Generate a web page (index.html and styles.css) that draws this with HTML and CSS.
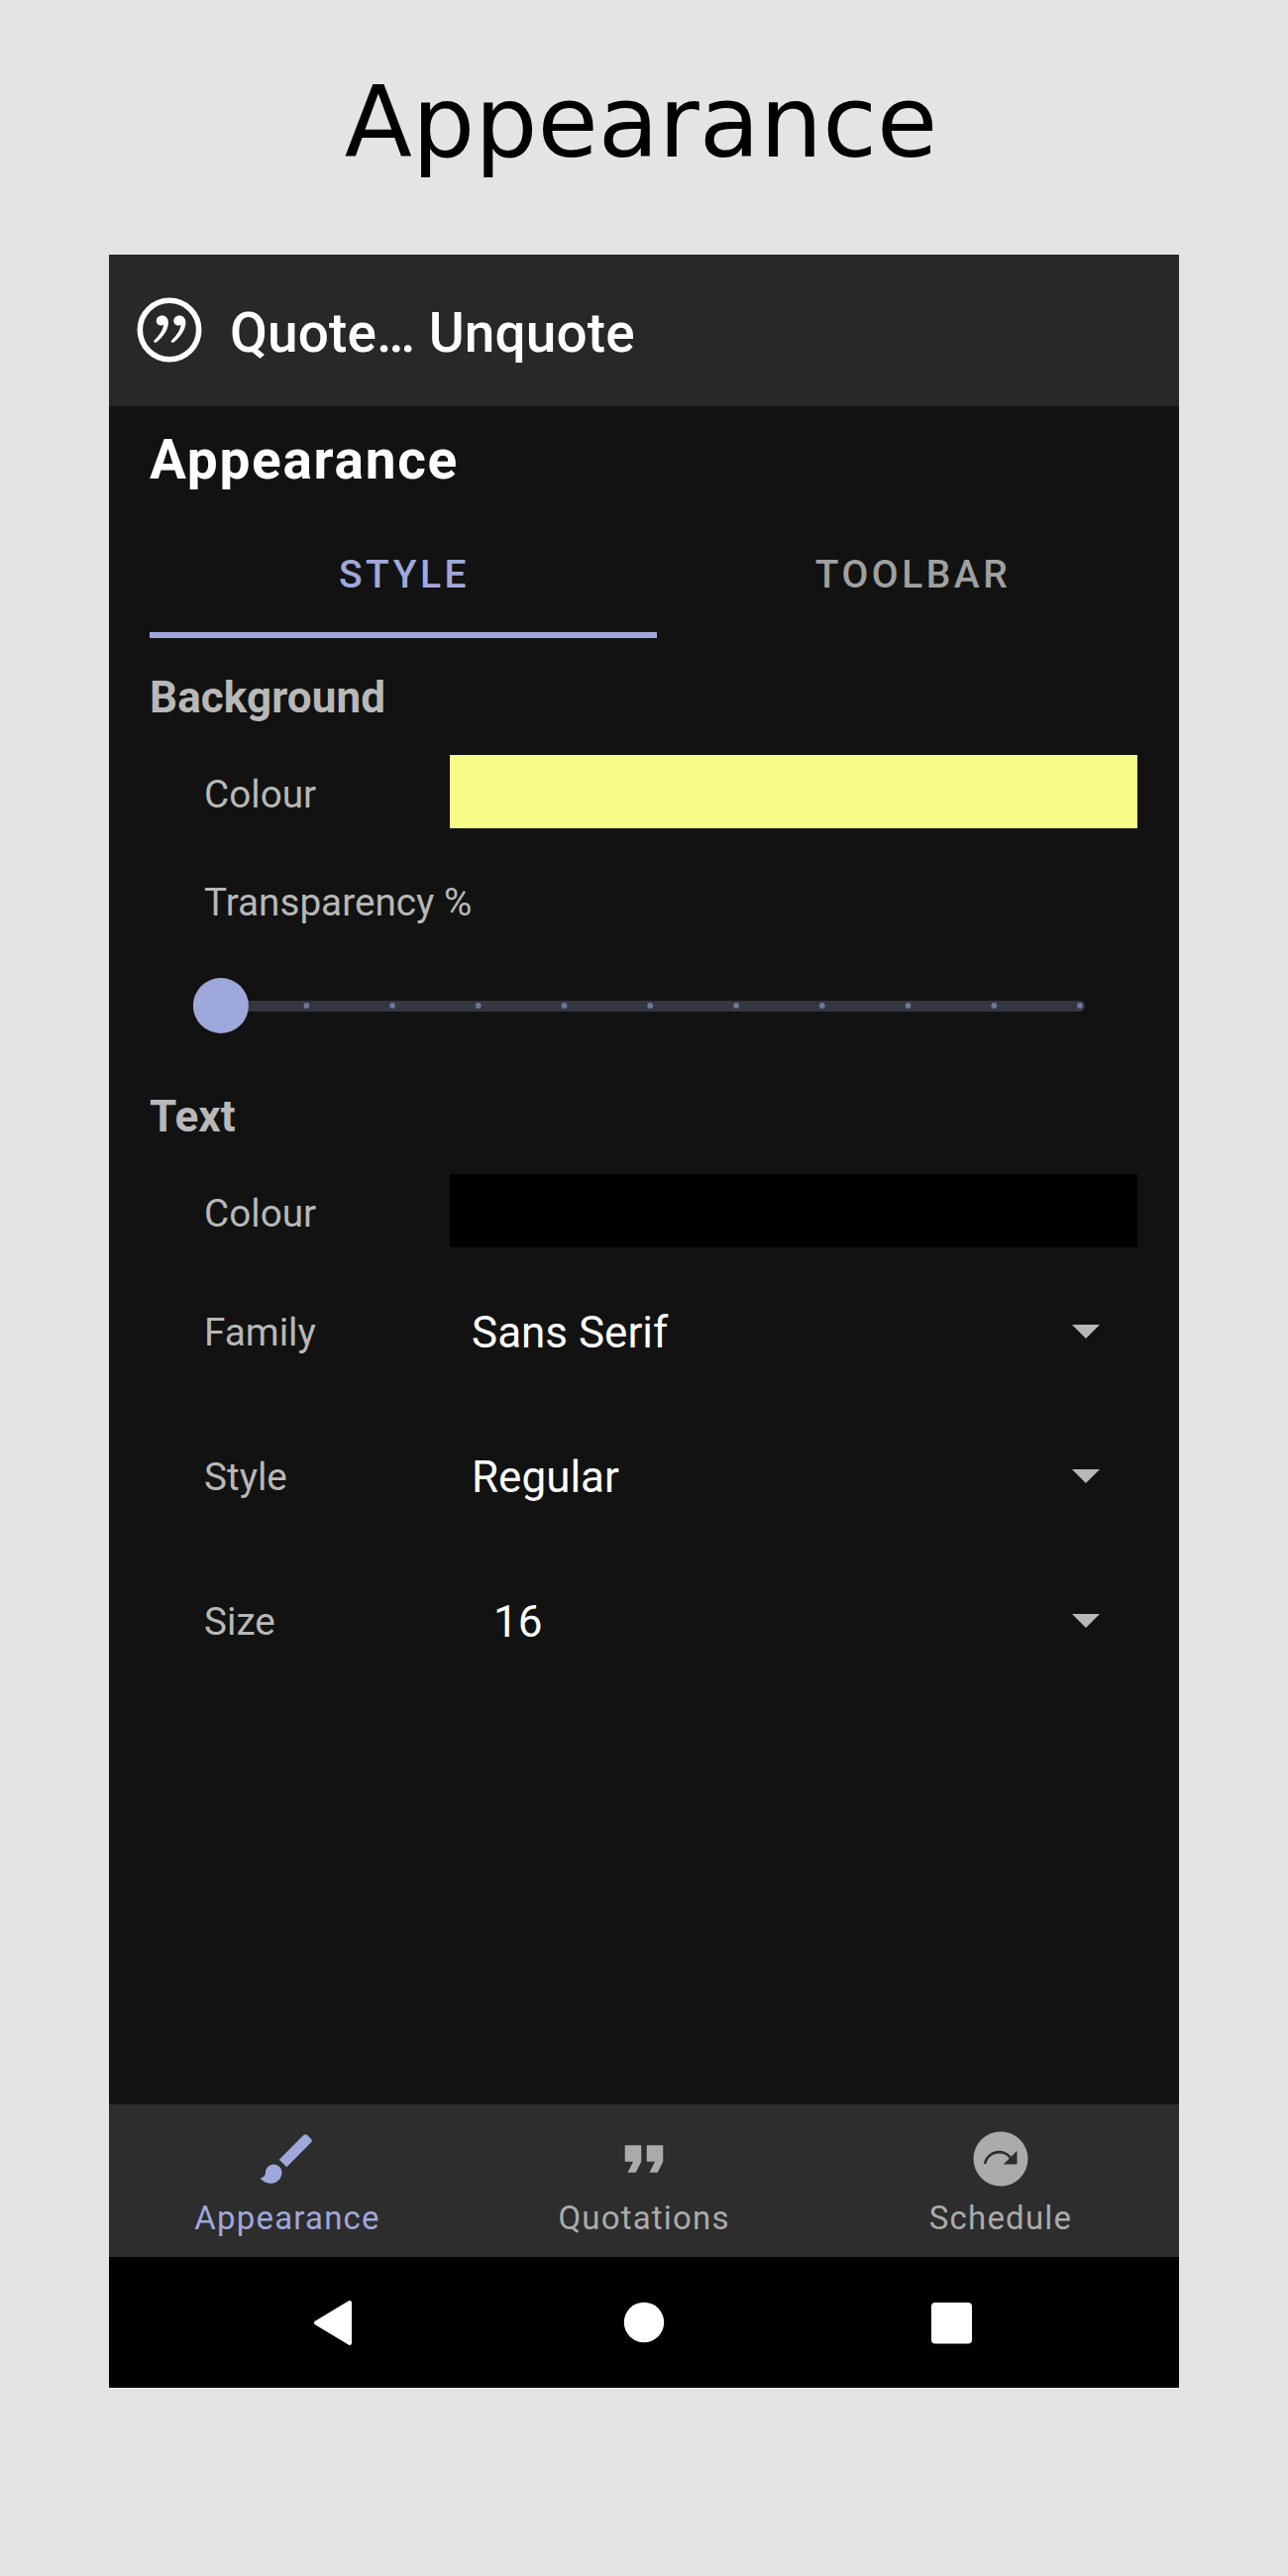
FILE: index.html
```html
<!DOCTYPE html>
<html lang="en">
<head>
<meta charset="utf-8">
<title>Appearance</title>
<link rel="stylesheet" href="styles.css">
</head>
<body>
<h1 class="caption">Appearance</h1>
<main class="phone">
  <header class="app-bar">
    <svg class="logo" viewBox="0 0 66 66"><circle cx="33" cy="33" r="29.7" fill="none" stroke="#fff" stroke-width="5.600"/><g fill="#fff"><path id="q" d="M25.500 18.500c-3.200 0-5.700 2.300-5.700 5.200 0 2.800 2.100 4.800 4.700 4.800 1 0 2-.3 2.600-.8-.7 5.600-4.500 11-9.200 15.600-1.700 1.600.3 3.400 1.900 2.100C26.500 40.300 31.900 33 31.900 25.500c0-4.300-2.500-7-6.400-7z"/><use href="#q" x="17.500"/></g></svg>
    <span class="app-name">Quote… Unquote</span>
  </header>
  <section class="content">
    <h2 class="page-title">Appearance</h2>
    <nav class="tabs"><span class="tab tab-active">STYLE</span><span class="tab">TOOLBAR</span></nav>
    <h3 class="group-title">Background</h3>
    <div class="row colour-row"><span class="label">Colour</span><span class="swatch swatch-yellow"></span></div>
    <div class="row transparency-row"><span class="label">Transparency %</span></div>
    <svg class="slider" viewBox="0 0 914 60">
      <rect x="22" y="25" width="878" height="11" rx="5.500" fill="#343640"/>
      <path d="M114.300 30h0M201.100 30h0M287.800 30h0M374.600 30h0M461.300 30h0M548.100 30h0M634.800 30h0M721.600 30h0M808.300 30h0M895 30h0" stroke="#70759a" stroke-width="5.800" stroke-linecap="round"/>
      <circle cx="27.900" cy="30" r="28" fill="#9fa8da"/>
    </svg>
    <h3 class="group-title text-title">Text</h3>
    <div class="row colour-row"><span class="label">Colour</span><span class="swatch swatch-black"></span></div>
    <div class="row select-row"><span class="label">Family</span><span class="value">Sans Serif</span><svg class="arrow" viewBox="0 0 28 14"><path d="M0 0h28L14 14z"/></svg></div>
    <div class="row select-row"><span class="label">Style</span><span class="value">Regular</span><svg class="arrow" viewBox="0 0 28 14"><path d="M0 0h28L14 14z"/></svg></div>
    <div class="row select-row"><span class="label">Size</span><span class="value value-number">16</span><svg class="arrow" viewBox="0 0 28 14"><path d="M0 0h28L14 14z"/></svg></div>
  </section>
  <nav class="bottom-nav">
    <div class="item item-active"><svg class="icon" viewBox="0 0 24 24"><path fill="currentColor" d="M7 14c-1.660 0-3 1.340-3 3 0 1.310-1.160 2-2 2 .92 1.220 2.490 2 4 2 2.210 0 4-1.790 4-4 0-1.660-1.340-3-3-3zm13.710-9.370l-1.340-1.340c-.39-.39-1.020-.39-1.410 0L9 12.250 11.750 15l8.960-8.960c.39-.39.39-1.020 0-1.410z"/></svg><span>Appearance</span></div>
    <div class="item"><svg class="icon" viewBox="0 0 24 24"><path fill="currentColor" d="M6 17h3l2-4V7H5v6h3zm8 0h3l2-4V7h-6v6h3z"/></svg><span>Quotations</span></div>
    <div class="item"><svg class="icon" viewBox="0 0 24 24"><circle cx="12" cy="12" r="10" fill="currentColor"/><path d="M6.150 13.800A5.350 5.350 0 0 1 15.900 12" fill="none" stroke="#2d2d2d"/><path fill="#2d2d2d" d="M18 9v5h-5z"/></svg><span>Schedule</span></div>
  </nav>
  <footer class="system-nav">
    <svg class="sys" viewBox="0 0 48 48"><path d="M38 4v41L4 24.500z" fill="#fff" stroke="#fff" stroke-width="4" stroke-linejoin="round"/></svg>
    <svg class="sys" viewBox="0 0 48 48"><circle cx="24" cy="24" r="20.200" fill="#fff"/></svg>
    <svg class="sys" viewBox="0 0 48 48"><rect x="3" y="4" width="41" height="41.500" rx="4" fill="#fff"/></svg>
  </footer>
</main>
</body>
</html>
```
FILE: styles.css
```css
body { margin: 0; height: 2600px; background: #e4e4e4; font-family: Roboto, sans-serif; }
h1, h2, h3 { margin: 0; }
.caption { height: 257px; box-sizing: border-box; padding-top: 66px; padding-right: 6px; font: 400 99.7px/116px "DejaVu Sans", sans-serif; text-align: center; color: #000; }
.phone { width: 1080px; height: 2153px; margin: 0 auto; display: flex; flex-direction: column; background: #121212; color: #fff; }
.app-bar { height: 153px; display: flex; align-items: center; background: #282828; }
.logo { width: 66px; height: 66px; margin: 0 0 1px 28px; }
.app-name { margin-left: 28px; padding-top: 4px; font-size: 55px; font-weight: 500; line-height: 64px; letter-spacing: 0.1px; white-space: nowrap; }
.content { flex: 1; padding-left: 41px; padding-right: 42px; }
.page-title { padding-top: 21px; font-size: 55px; font-weight: 700; line-height: 66px; letter-spacing: 0.031em; }
.tabs { display: flex; height: 132px; margin-top: 15px; }
.tab { flex: none; width: 512px; height: 132px; box-sizing: border-box; padding: 45px 0 0 5px; text-align: center; font-size: 39px; font-weight: 500; line-height: 46px; letter-spacing: 0.0893em; color: #a0a0a0; }
.tab-active { padding-left: 2px; color: #9fa8da; border-bottom: 6px solid #9fa8da; }
.group-title { margin-top: 33px; font-size: 44px; font-weight: 700; line-height: 54px; letter-spacing: 0.1px; color: #b8b8b8; }
.row { display: flex; padding-left: 55px; align-items: center; }
.label { width: 248px; flex: none; padding-top: 2px; font-size: 38.7px; line-height: 46px; color: #b8b8b8; white-space: nowrap; }
.colour-row { height: 74px; margin-top: 31px; }
.colour-row .label { padding-top: 6px; }
.swatch { flex: 1; height: 74px; }
.swatch-yellow { background: #f8fd89; }
.swatch-black { background: #000; }
.transparency-row { height: 46px; margin-top: 51px; }
.slider { display: block; width: 914px; height: 60px; margin: 52px 0 0 44px; }
.text-title { margin-top: 55px; }
.select-row { height: 146px; }
.colour-row + .select-row { margin-top: 12px; }
.value { flex: 1; padding-top: 2px; padding-left: 22px; font-size: 44px; line-height: 52px; }
.value-number { padding-left: 44px; }
.arrow { width: 28px; height: 14px; margin-right: 38px; fill: #b8b8b8; }
.bottom-nav { height: 154px; display: flex; background: #2d2d2d; }
.item { flex: 1; display: flex; flex-direction: column; align-items: center; padding-top: 22px; box-sizing: border-box; font-size: 33px; line-height: 40px; letter-spacing: 0.036em; color: #ababab; }
.item-active { color: #9fa8da; }
.icon { width: 66px; height: 66px; margin-bottom: 7px; }
.system-nav { height: 132px; display: flex; justify-content: space-between; align-items: center; padding: 0 205px; background: #000; }
.sys { width: 48px; height: 48px; }
```
